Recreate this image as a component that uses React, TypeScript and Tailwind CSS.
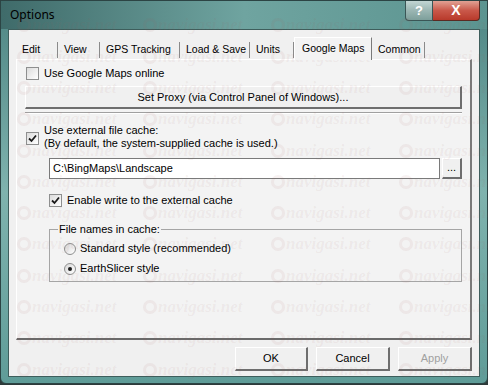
import React from 'react';

const tabs = [
  { label: 'Edit', w: 42 },
  { label: 'View', w: 42 },
  { label: 'GPS Tracking', w: 80 },
  { label: 'Load & Save', w: 70 },
  { label: 'Units', w: 44 },
  { label: 'Google Maps', w: 78, active: true },
  { label: 'Common', w: 53 },
];

function Checkbox({ checked }: { checked?: boolean }) {
  return (
    <span className="flex h-[13px] w-[13px] shrink-0 items-center justify-center border border-[#8e8f8f] bg-gradient-to-br from-[#dcdcdc] to-white">
      {checked && (
        <svg width="9" height="9" viewBox="0 0 9 9">
          <path d="M1 4.5 L3.5 7 L8 1.5" stroke="#1a1a1a" strokeWidth="1.8" fill="none" />
        </svg>
      )}
    </span>
  );
}

function Radio({ checked }: { checked?: boolean }) {
  return (
    <span className="flex h-[12px] w-[12px] shrink-0 items-center justify-center rounded-full border border-[#8e8f8f] bg-gradient-to-br from-[#d8d8d8] to-white">
      {checked && <span className="h-[4px] w-[4px] rounded-full bg-[#1a1a1a]" />}
    </span>
  );
}

function Btn({ children, className = '', disabled }: { children: React.ReactNode; className?: string; disabled?: boolean }) {
  return (
    <button
      className={`flex items-center justify-center border-t border-l border-t-white border-l-white border-r-2 border-b-2 border-r-[#6e6e6e] border-b-[#6e6e6e] bg-[#f0f0f0] leading-[13px] ${
        disabled ? 'text-[#a0a0a0]' : 'text-black'
      } ${className}`}
    >
      {children}
    </button>
  );
}

// faint site watermark lying over the whole shot
function Watermark() {
  const rows = [25, 57, 88, 119, 151, 182, 213, 244, 276, 307, 338, 370];
  const cols = [17, 143, 271, 399];
  return (
    <div className="pointer-events-none absolute inset-0 overflow-hidden">
      {rows.map((y) =>
        cols.map((x) => (
          <div
            key={`${x}-${y}`}
            className="absolute flex items-center gap-[1px] whitespace-nowrap text-[rgba(160,90,90,0.08)] font-['Liberation_Serif',serif] text-[17px] font-bold italic leading-none"
            style={{ left: x, top: y - 9 }}
          >
            <span className="h-[14px] w-[14px] rounded-full border-[3px] border-[rgba(160,90,90,0.08)]" />
            navigasi.net
          </div>
        ))
      )}
    </div>
  );
}

export default function App() {
  return (
    <div className="relative h-[385px] w-[488px] overflow-hidden bg-[#2d3a3a] font-['Liberation_Sans',Arial,sans-serif] text-[11px] leading-[13px] text-black">
      <div className="flex h-[384px] w-[488px] flex-col rounded-b-[6px] border border-[#2c4444] bg-gradient-to-b from-[#4d8583] via-[#7fb3ae] to-[#5f9c98]">
        {/* Title bar */}
        <div className="flex h-[28px] items-start bg-gradient-to-r from-[#3f6b6a] via-[#6fa4a0] to-[#5b9490]">
          <span className="ml-[9px] mt-[6px] font-['Noto_Sans',sans-serif] text-[12px] leading-[16px] text-black">Options</span>
          <div className="ml-auto mr-[7px] flex">
            <div className="flex h-[20px] w-[28px] items-center justify-center rounded-bl-[4px] border border-t-0 border-[#3a5656] bg-gradient-to-b from-[#c2d6d4] via-[#9bb6b3] to-[#7d9f9b] text-[13px] font-bold text-white">
              ?
            </div>
            <div className="flex h-[20px] w-[47px] items-center justify-center rounded-br-[4px] border border-l-0 border-t-0 border-[#5a2a22] bg-gradient-to-b from-[#e0a194] via-[#c9584a] to-[#b8392a] text-[14px] font-bold text-white">
              X
            </div>
          </div>
        </div>

        {/* Client area */}
        <div className="mx-[7px] mb-[6px] flex flex-1 flex-col border border-[#3e5e5c] bg-[#f0f0f0] pb-[5px]">
          <div className="flex h-[29px] items-end pl-[7px] text-[10.5px]">
            {tabs.map((t) =>
              t.active ? (
                <div
                  key={t.label}
                  className="relative z-10 -mb-[1px] flex h-[23px] items-center whitespace-nowrap border-l border-r border-t border-l-white border-t-white border-r-[#7a7a7a] bg-[#f3f3f3] pb-[2px] pl-[7px]"
                  style={{ width: t.w }}
                >
                  {t.label}
                </div>
              ) : (
                <div key={t.label} className="flex h-[19px] items-center whitespace-nowrap pl-[6px]" style={{ width: t.w }}>
                  <span className="flex-1">{t.label}</span>
                  <span className="h-[16px] w-[1px] shrink-0 bg-[#8a8a8a]" />
                </div>
              )
            )}
          </div>

          {/* Tab panel */}
          <div className="mx-[7px] flex h-[281px] flex-col border-l border-t border-l-white border-t-white border-r-2 border-b-2 border-r-[#7a7a7a] border-b-[#6a6a6a] bg-[#f3f3f3] px-[8px]">
            <div className="mt-[7px] flex items-center gap-[5px] pl-[1px]">
              <Checkbox />
              <span>Use Google Maps online</span>
            </div>
            <Btn className="mt-[6px] h-[23px] w-full">Set Proxy (via Control Panel of Windows)...</Btn>
            <div className="mt-[3px] h-[2px] border-t border-b border-t-[#a0a0a0] border-b-white" />

            <div className="mt-[10px] flex items-start gap-[5px] pl-[1px]">
              <span className="mt-[8px]">
                <Checkbox checked />
              </span>
              <div>
                <div>Use external file cache:</div>
                <div>(By default, the system-supplied cache is used.)</div>
              </div>
            </div>

            <div className="mt-[8px] flex items-stretch gap-[2px] pl-[24px]">
              <div className="flex h-[21px] flex-1 items-center border border-[#7a7a7a] bg-white pl-[3px]">
                C:\BingMaps\Landscape
              </div>
              <Btn className="h-[21px] w-[20px] pb-[2px]">...</Btn>
            </div>

            <div className="mt-[15px] flex items-center gap-[5px] pl-[24px]">
              <Checkbox checked />
              <span>Enable write to the external cache</span>
            </div>

            <fieldset className="ml-[24px] mt-[16px] h-[59px] border border-[#a5a5a5] px-[8px]">
              <legend className="px-[1px]">File names in cache:</legend>
              <div className="mt-[6px] flex items-center gap-[4px] pl-[6px]">
                <Radio />
                <span>Standard style (recommended)</span>
              </div>
              <div className="mt-[7px] flex items-center gap-[4px] pl-[6px]">
                <Radio checked />
                <span>EarthSlicer style</span>
              </div>
            </fieldset>
          </div>

          <div className="mt-auto flex justify-end gap-[8px] pr-[7px]">
            <Btn className="h-[24px] w-[73px]">OK</Btn>
            <Btn className="h-[24px] w-[74px]">Cancel</Btn>
            <Btn className="h-[24px] w-[74px]" disabled>
              Apply
            </Btn>
          </div>
        </div>
      </div>
      <Watermark />
    </div>
  );
}
